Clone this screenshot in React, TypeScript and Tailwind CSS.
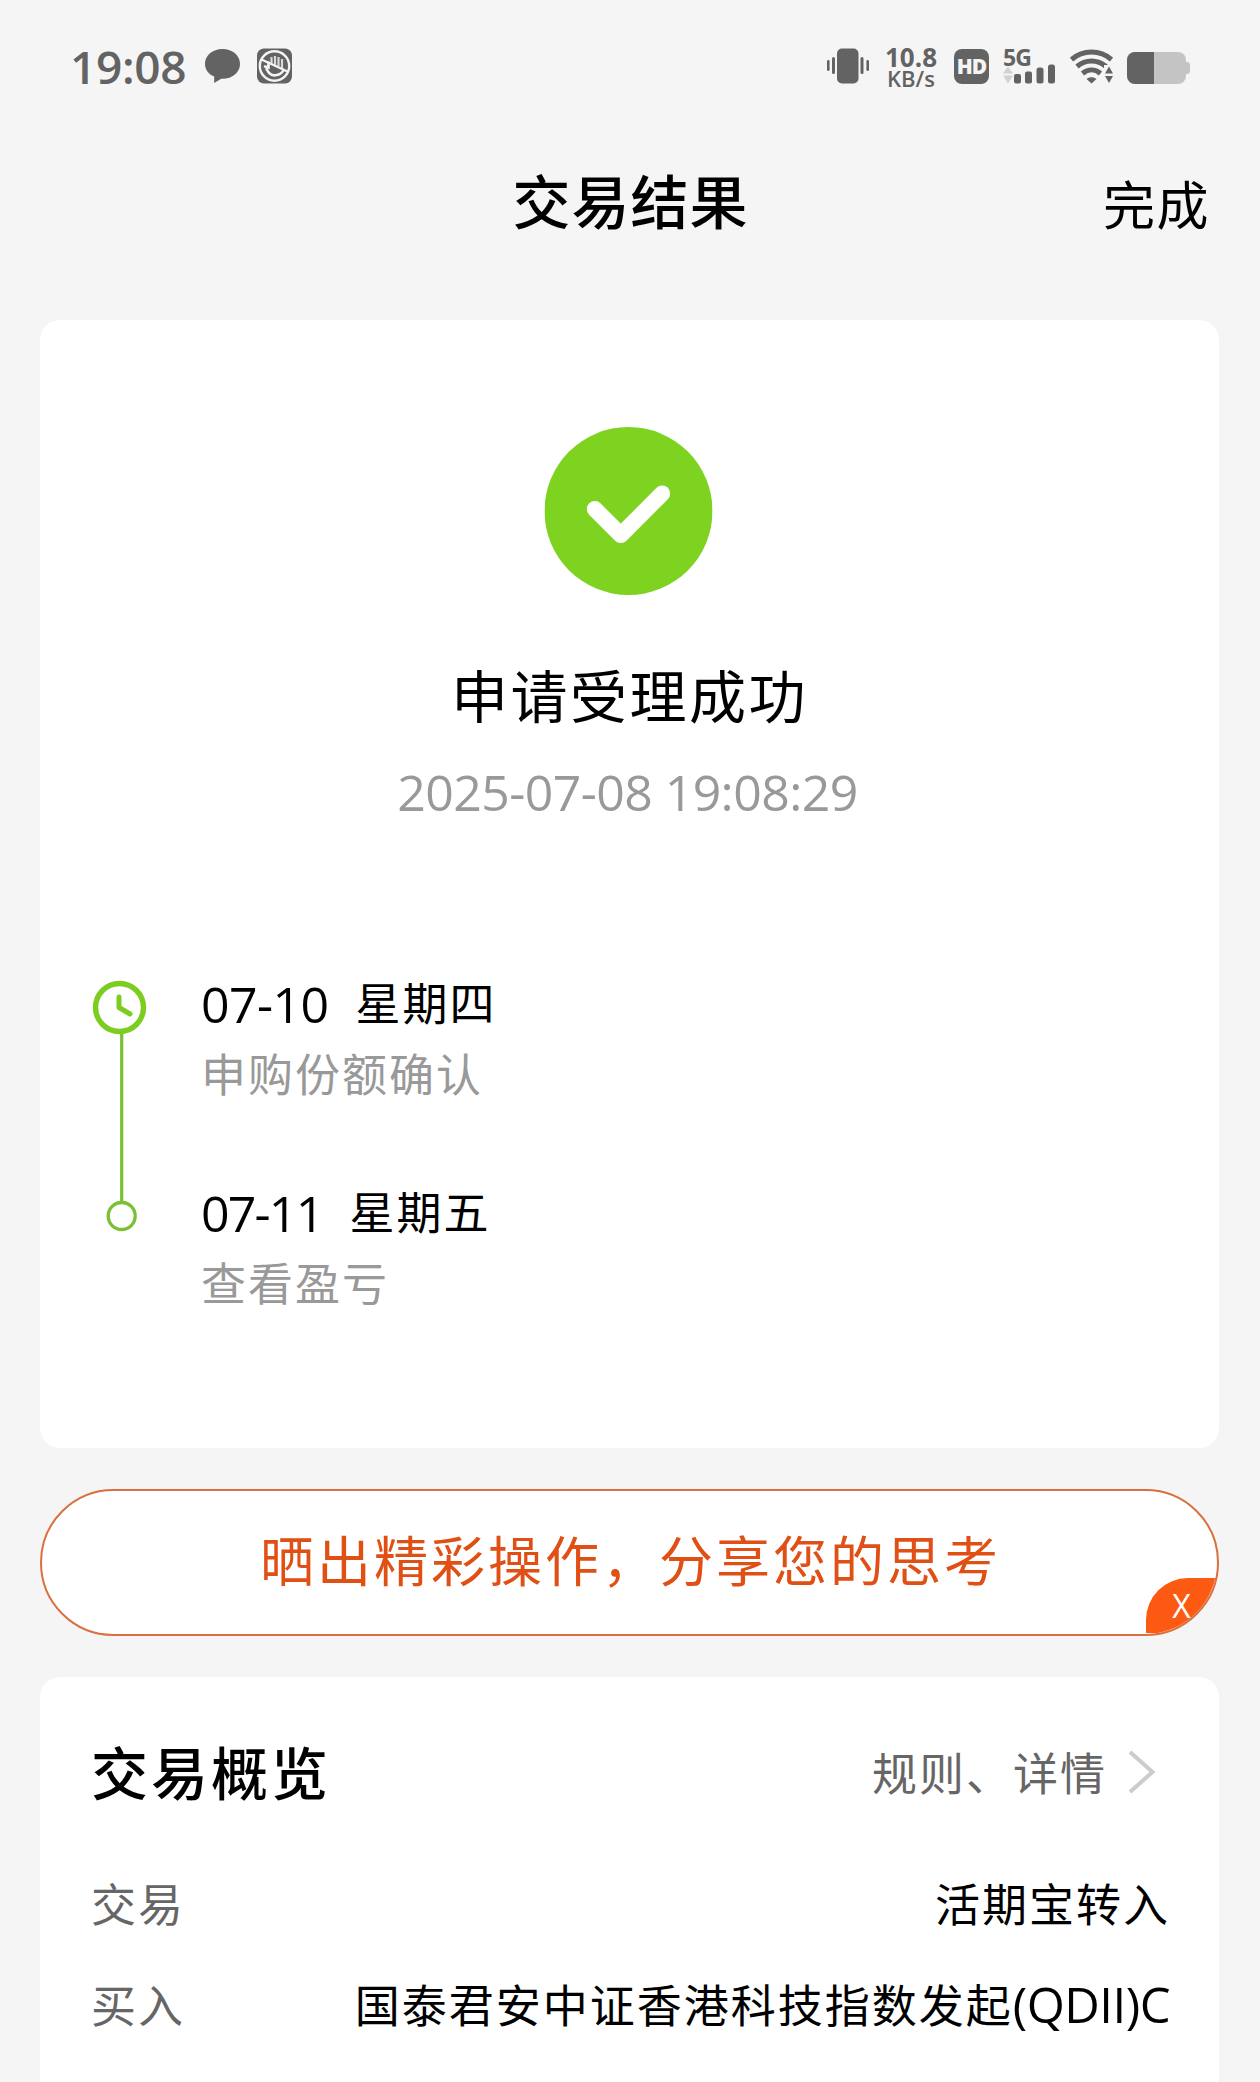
const steps = [
  { date: '07-10', day: '星期四', label: '申购份额确认', tracking: 'tracking-[-0.6px]' },
  { date: '07-11', day: '星期五', label: '查看盈亏', tracking: 'tracking-[-1.8px]' },
];

function StatusBar() {
  return (
    <div className="flex h-[132px] items-center pl-[70px] pr-[70px] font-['Open_Sans',sans-serif] text-[#636363]">
      <span className="w-[135px] text-[46px] font-semibold leading-none tracking-[-0.3px]">19:08</span>
      <svg className="h-9 w-[35px]" viewBox="0 0 35 36" fill="currentColor">
        <path d="M17.5 1C7.5 1 0 7.5 0 15.8c0 6 3.5 10.5 9.2 12.8V35l7-4.2c11 .4 18.8-6 18.8-15C35 7.500 27.500 1 17.500 1Z" />
      </svg>
      <svg className="ml-[17px] h-9 w-[35px]" viewBox="0 0 35 36">
        <rect y=".5" width="35" height="35" rx="7" fill="#636363" />
        <path d="M14.500 9v6.500M18 8v9M21.500 9v9.500M25 11v9" stroke="#d8d8d8" strokeWidth="2.200" />
        <path d="M8 18.500l3.500 1v-5M9.500 21c2.500 5 5.500 6.800 9 6.300 3.500-.5 6.500-2.500 8-5" fill="none" stroke="#f4f4f4" strokeWidth="2.600" strokeLinecap="round" />
        <circle cx="17.500" cy="18" r="14.700" fill="none" stroke="#f4f4f4" strokeWidth="2.400" />
        <path d="M4.500 11.500l26 12" stroke="#f4f4f4" strokeWidth="2.400" />
      </svg>

      <div className="ml-auto flex items-center">
        <svg className="h-9 w-[42px]" viewBox="0 0 42 36" fill="currentColor">
          <rect x="10" y="0.500" width="21.500" height="35" rx="5" />
          <rect x="0" y="12" width="2.600" height="11" rx="1.300" />
          <rect x="5" y="9" width="3" height="17" rx="1.500" />
          <rect x="33.500" y="9" width="3" height="17" rx="1.500" />
          <rect x="39.400" y="12" width="2.600" height="11" rx="1.300" />
        </svg>
        <div className="ml-4 flex w-[52px] flex-col items-center pt-1 font-bold">
          <span className="text-[26px] leading-[21px]">10.8</span>
          <span className="text-[22px] font-semibold leading-[21px]">KB/s</span>
        </div>
        <div className="ml-[17px] flex h-[35px] w-[35px] items-center justify-center rounded-[8px] bg-[#636363] text-[21px] font-extrabold leading-none tracking-[-1px] text-[#f4f4f4]">
          HD
        </div>
        <div className="relative ml-3.5 h-9 w-[53px]">
          <svg className="h-9 w-[53px]" viewBox="0 0 53 36" fill="currentColor">
            <path d="M5 18.500l5 7H0zM0 27.500h10l-5 8z" fill="#d2d2d2" />
            <rect x="11" y="26" width="7" height="9.500" rx="2" />
            <rect x="22" y="23.500" width="7" height="12" rx="2" />
            <rect x="33.500" y="19.500" width="7" height="16" rx="2.500" />
            <rect x="45" y="16.500" width="7" height="19" rx="2.500" />
          </svg>
          <span className="absolute left-0 top-[-5px] text-[23px] font-bold leading-7 tracking-[-1px]">5G</span>
        </div>
        <svg className="ml-3.5 h-9 w-[43px]" viewBox="0 0 43 36" fill="none" stroke="currentColor" strokeWidth="5">
          <path d="M1.500 11.500C13 1.500 30 1.500 41.500 11.500" />
          <path d="M7 18.500c8.500-7.300 20.500-7.300 29 0" />
          <path d="M12.500 25.500c5.500-4.700 12.500-4.700 18 0" />
          <path d="M16.500 31c3-2.500 7-2.500 10 0l-5 4.500z" fill="currentColor" stroke="none" />
          <path d="M34 17h10v19H34z" fill="#f5f5f5" stroke="none" />
          <path d="M35 25.500l4-7 4 7zM35 28h8l-4 7z" fill="currentColor" stroke="none" />
        </svg>
        <div className="ml-3.5 mt-1 flex items-center">
          <div className="h-8 w-[59px] overflow-hidden rounded-[8px] bg-[#c4c4c4]">
            <div className="h-8 w-[27px] bg-[#636363]" />
          </div>
          <div className="h-3 w-1 rounded-r-[3px] bg-[#c4c4c4]" />
        </div>
      </div>
    </div>
  );
}

function Timeline() {
  return (
    <div className="mt-[161px] flex pl-[52px]">
      <svg className="h-[260px] w-14 shrink-0" viewBox="0 0 56 260" fill="none">
        <path d="M29.700 53v170" stroke="#7bc034" strokeWidth="3.200" />
        <circle cx="27.500" cy="29.500" r="24" stroke="#7ccd20" strokeWidth="5.400" />
        <path d="M27 19v10.500l11 6.500" stroke="#7ccd20" strokeWidth="5" strokeLinecap="round" strokeLinejoin="round" />
        <circle cx="29.700" cy="238" r="13.500" stroke="#7bc034" strokeWidth="3.300" />
      </svg>
      <div className="ml-[53px]">
        {steps.map((step) => (
          <div key={step.date} className="h-[209px]">
            <div className="flex h-[54px] items-start">
              <span className={`font-['Open_Sans',sans-serif] text-[50px] leading-[52px] ${step.tracking}`}>{step.date}</span>
              <span className="ml-[27px] text-[45px] leading-[48px] tracking-[2px]">{step.day}</span>
            </div>
            <div className="mt-3.5 text-[45px] leading-[54px] tracking-[2px] text-[#999]">{step.label}</div>
          </div>
        ))}
      </div>
    </div>
  );
}

export default function App() {
  return (
    <div className="h-[2082px] overflow-hidden bg-[#f5f5f5] font-['Noto_Sans_CJK_SC',sans-serif] text-black">
      <StatusBar />

      {/* Header */}
      <header className="grid h-[188px] grid-cols-[1fr_auto_1fr] items-start pl-[51px] pr-[50px] pt-9">
        <span />
        <h1 className="text-[58px] font-medium leading-[62px] tracking-[1px]">交易结果</h1>
        <button className="justify-self-end text-[52px] leading-[70px] tracking-[1.5px]">完成</button>
      </header>

      <main className="ml-10 w-[1179px]">
        {/* Result */}
        <section className="h-[1128px] rounded-[20px] bg-white pt-[107px]">
          <svg className="mx-auto h-[168px] w-[168px] -translate-x-[1.500px]" viewBox="0 0 168 168" fill="none">
            <circle cx="84" cy="84" r="84" fill="#7ed321" />
            <path d="M50.300 82l26 26 41.400-41.500" stroke="#fff" strokeWidth="16" strokeLinecap="round" strokeLinejoin="round" />
          </svg>
          <h2 className="mt-[60px] text-center text-[57px] leading-[76px] tracking-[2.500px]">申请受理成功</h2>
          <p className="mt-9 pr-1 text-center font-['Open_Sans',sans-serif] text-[50px] leading-[50px] tracking-[-0.600px] text-[#999]">
            2025-07-08 19:08:29
          </p>
          <Timeline />
        </section>

        {/* Share */}
        <div className="relative mt-[41px] flex h-[147px] items-center justify-center overflow-hidden rounded-full border-2 border-[#d8703f] bg-white">
          <span className="pb-[7px] pl-0.5 text-[54px] leading-[72px] tracking-[3px] text-[#e04f14]">晒出精彩操作，分享您的思考</span>
          <button className="absolute bottom-px right-0 flex h-[55px] w-[71px] items-center justify-center rounded-tl-[42px] bg-[#fc5a12] font-['Open_Sans',sans-serif] text-[32px] text-white">
            X
          </button>
        </div>

        {/* Overview */}
        <section className="mt-[41px] h-[460px] rounded-[20px] bg-white pl-[51px] pr-[49px] pt-[53px]">
          <div className="flex h-[80px] items-center justify-between">
            <h3 className="text-[57px] font-medium leading-[80px] tracking-[3px]">交易概览</h3>
            <div className="flex items-center pr-[14px] text-[45px] leading-[80px] tracking-[2px] text-[#666]">
              <span className="pt-1">规则、详情</span>
              <svg className="ml-[21px] mt-1 h-[44px] w-7" viewBox="0 0 28 44" fill="none">
                <path d="M2 2l22.500 20L2 42" stroke="#ccc" strokeWidth="4" />
              </svg>
            </div>
          </div>
          <div className="mt-[63px] flex h-[60px] items-center justify-between text-[45px] leading-[60px] tracking-[2px]">
            <span className="text-[#666]">交易</span>
            <span>活期宝转入</span>
          </div>
          <div className="mt-[41px] flex h-[60px] items-center justify-between text-[45px] leading-[60px] tracking-[2px]">
            <span className="text-[#666]">买入</span>
            <span>
              国泰君安中证香港科技指数发起
              <span className="font-['Open_Sans',sans-serif] text-[49px] tracking-[-0.500px]">(QDII)C</span>
            </span>
          </div>
        </section>
      </main>
    </div>
  );
}
